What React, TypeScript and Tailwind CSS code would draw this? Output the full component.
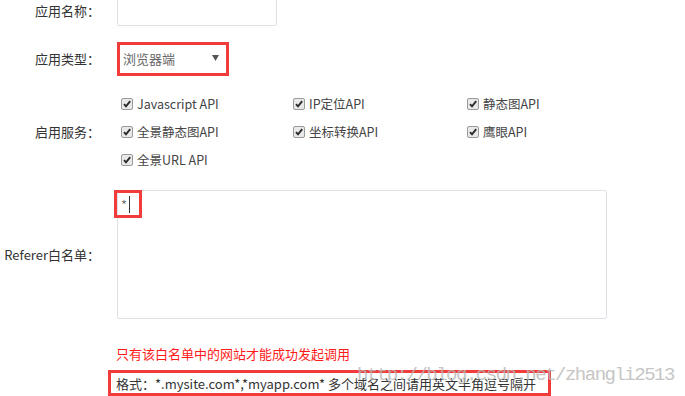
import { FC } from "react";

const services = [
  "Javascript API",
  "IP定位API",
  "静态图API",
  "全景静态图API",
  "坐标转换API",
  "鹰眼API",
  "全景URL API",
];

const CheckBox: FC = () => (
  <svg width="12" height="12" viewBox="0 0 12 12" className="shrink-0">
    <rect x="0.5" y="0.5" width="11" height="11" rx="1.5" fill="#e9e9e9" stroke="#9a9a9a" />
    <path d="M3 6.2 L5 8.4 L9.2 3.2" fill="none" stroke="#2b2b2b" strokeWidth="1.9" />
  </svg>
);

const Row: FC<{ label: string; className?: string; children: React.ReactNode }> = ({
  label,
  className = "",
  children,
}) => (
  <div className={`flex items-center ${className}`}>
    <div className="w-[100px] shrink-0 text-right text-[13px] leading-[18px] text-[#333]">{label}</div>
    <div className="ml-[17px]">{children}</div>
  </div>
);

export default function App() {
  return (
    <div
      className="relative h-[396px] w-[685px] overflow-hidden bg-white"
      style={{ fontFamily: '"Noto Sans CJK SC", "Noto Sans", sans-serif' }}
    >
      <Row label="应用名称：" className="-mt-[4px]">
        <div className="h-[30px] w-[160px] rounded-[2px] border border-[#dfe1e6] bg-white" />
      </Row>

      <Row label="应用类型：" className="mt-[16px]">
        <div className="flex h-[34px] w-[112px] items-center justify-between border-[3px] border-[#f23b3b] pl-[3px] pr-[7px]">
          <span className="text-[13px] leading-[18px] text-[#666]">浏览器端</span>
          <svg width="7" height="6" viewBox="0 0 7 6" className="-mt-[3px]">
            <path d="M0 0 H7 L3.5 6 Z" fill="#555" />
          </svg>
        </div>
      </Row>

      <Row label="启用服务：" className="mt-[14px]">
        <div className="grid w-[520px] grid-cols-[172px_174px_174px] pl-[4px]">
          {services.map((s) => (
            <div key={s} className="flex h-[28px] items-center gap-[4px]">
              <CheckBox />
              <span className="text-[12.5px] leading-[18px] text-[#444]">{s}</span>
            </div>
          ))}
        </div>
      </Row>

      <Row label="Referer白名单：" className="mt-[16px]">
        <div className="relative h-[129px] w-[490px] rounded-[2px] border border-[#dfe1e6] bg-white">
          <div className="absolute -left-[4px] -top-[1px] flex h-[28px] w-[28px] items-center border-[3px] border-[#f23b3b] pl-[4px]">
            <span className="text-[13px] leading-none text-[#777]">*</span>
            <span className="ml-[2px] h-[17px] w-px bg-[#333]" />
          </div>
        </div>
      </Row>

      <div className="ml-[116px] mt-[26px] text-[13px] leading-[18px] text-[#ff1a1a]">
        只有该白名单中的网站才能成功发起调用
      </div>

      <div className="ml-[108px] mt-[7px] flex h-[27px] w-[443px] items-end overflow-hidden border-[3px] border-b-[4px] border-[#f23b3b] pl-[5px]">
        <span className="whitespace-nowrap text-[13px] leading-[18px] text-[#333]">
          格式：*.mysite.com*,*myapp.com* 多个域名之间请用英文半角逗号隔开
        </span>
      </div>

      <div
        className="pointer-events-none absolute left-[357px] top-[364px] text-[19px] leading-[22px] tracking-[-1.5px] text-[#b8b8b8] opacity-80"
        style={{ fontFamily: '"Liberation Mono", monospace' }}
      >
        http://blog.csdn.net/zhangli2513
      </div>
    </div>
  );
}
